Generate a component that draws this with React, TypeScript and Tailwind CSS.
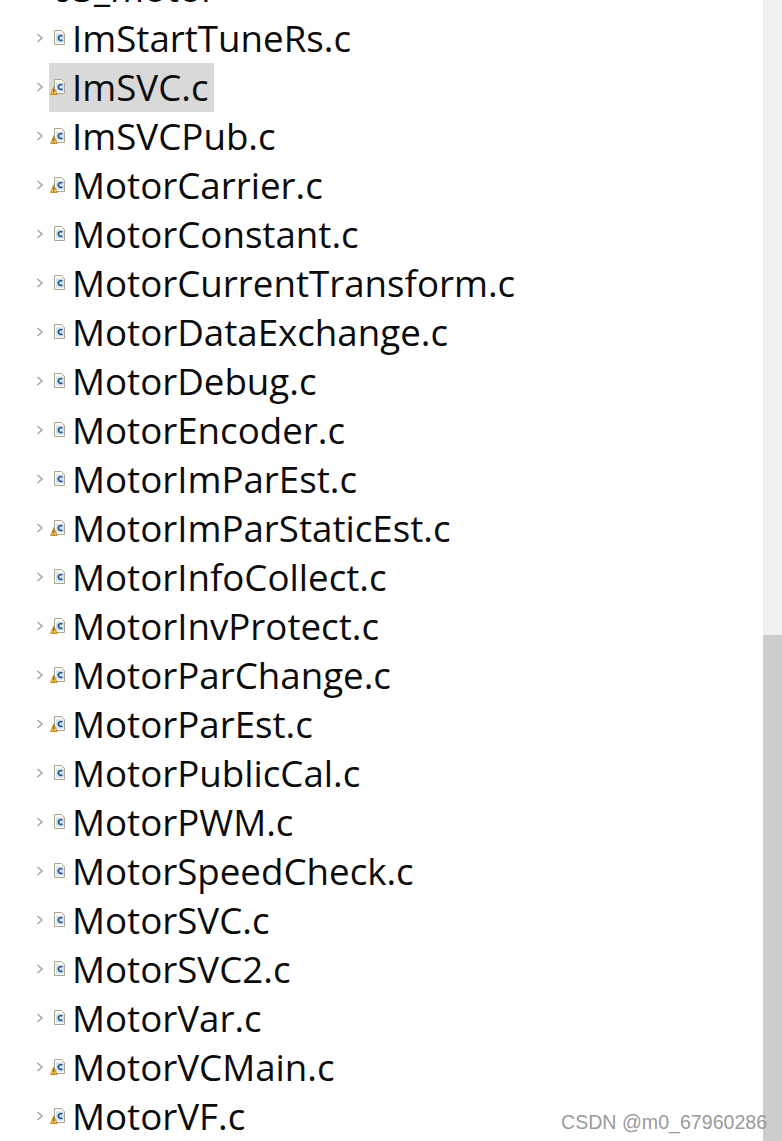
import React from "react";

const files: [string, boolean][] = [
  ["ImStartTuneRs.c", false],
  ["ImSVC.c", true],
  ["ImSVCPub.c", true],
  ["MotorCarrier.c", true],
  ["MotorConstant.c", false],
  ["MotorCurrentTransform.c", false],
  ["MotorDataExchange.c", false],
  ["MotorDebug.c", false],
  ["MotorEncoder.c", false],
  ["MotorImParEst.c", false],
  ["MotorImParStaticEst.c", true],
  ["MotorInfoCollect.c", false],
  ["MotorInvProtect.c", true],
  ["MotorParChange.c", true],
  ["MotorParEst.c", true],
  ["MotorPublicCal.c", false],
  ["MotorPWM.c", false],
  ["MotorSpeedCheck.c", false],
  ["MotorSVC.c", false],
  ["MotorSVC2.c", false],
  ["MotorVar.c", false],
  ["MotorVCMain.c", true],
  ["MotorVF.c", true],
];

function Chevron() {
  return (
    <svg width="8" height="10" viewBox="0 0 8 10" className="shrink-0 -translate-y-[1px]">
      <path d="M1.5 1 L6 5 L1.5 9" fill="none" stroke="#a8a8a8" strokeWidth="1.6" />
    </svg>
  );
}

function FileIcon({ warn }: { warn: boolean }) {
  return (
    <svg width="16" height="18" viewBox="0 0 16 18" className="shrink-0 -translate-y-[1px]">
      <path d="M4.5 1.5 H11.5 L14.5 4.5 V15.5 H4.5 Z" fill="#fbfaf3" stroke="#a9a68f" strokeWidth="1" />
      <rect x="6" y="4.5" width="8" height="9" fill="#d3e2f2" />
      <path d="M12.4 7.2 A2.4 2.4 0 1 0 12.4 10.8" fill="none" stroke="#1f568f" strokeWidth="1.6" />
      {warn && (
        <g>
          <path d="M3.8 8.8 L7.2 16.5 H0.5 Z" fill="#f6c647" stroke="#b8791a" strokeWidth="0.8" />
          <path d="M3.8 11 V14 M3.8 14.8 V15.8" stroke="#6b4207" strokeWidth="1" />
        </g>
      )}
    </svg>
  );
}

export default function App() {
  return (
    <div className="relative flex h-[1141px] w-[782px] overflow-hidden bg-white font-['Open_Sans','Noto_Sans',sans-serif] text-[#0b0b0b]">
      <div className="min-w-0 flex-1">
        <div className="-mt-[36px] flex h-[49px] items-center pl-[52px] text-[36.7px] leading-none">03_motor</div>
        <div className="flex flex-col pt-[1px]">
          {files.map(([name, warn]) => (
            <div key={name} className="flex h-[49px] items-center pl-[36px]">
              <Chevron />
              <div className={`ml-[5px] flex h-[49px] items-center pr-[5px] ${name === "ImSVC.c" ? "bg-[#d9d9d9]" : ""}`}>
                <div className="ml-[1px]">
                  <FileIcon warn={warn} />
                </div>
                <span className="ml-[6px] whitespace-nowrap text-[36.7px] leading-none">{name}</span>
              </div>
            </div>
          ))}
        </div>
      </div>
      <div className="flex w-[19px] shrink-0 flex-col bg-[#f0f0f0]">
        <div className="h-[635px] shrink-0" />
        <div className="flex-1 bg-[#cdcdcd]" />
      </div>
      <div className="absolute left-[561px] top-[1111px] whitespace-nowrap font-['Liberation_Sans',sans-serif] text-[19.6px] leading-[22px] text-[#9a9a9a]">
        CSDN @m0_67960286
      </div>
    </div>
  );
}
